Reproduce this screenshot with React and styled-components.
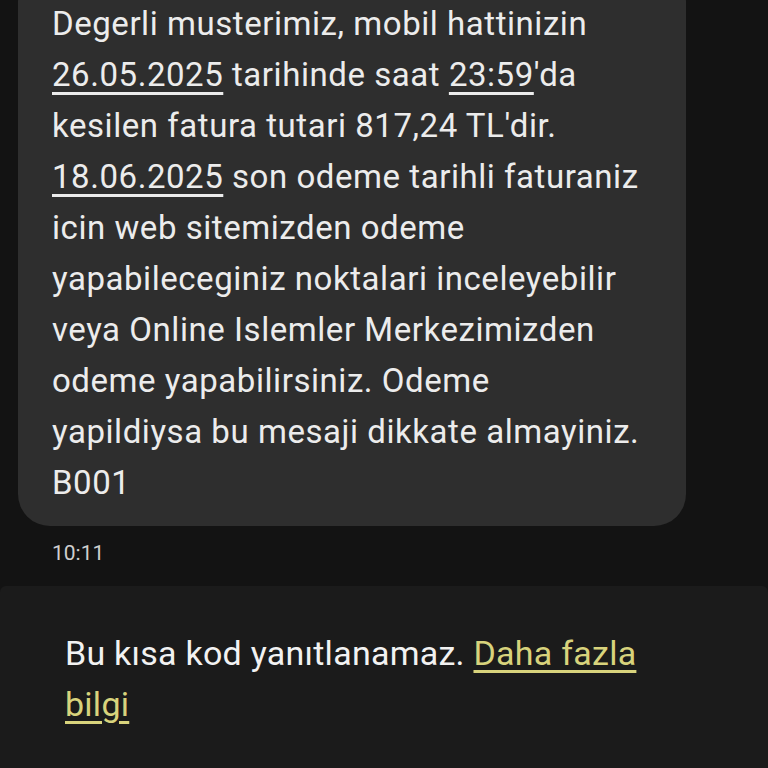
import React from "react";
import styled, { createGlobalStyle } from "styled-components";

const GlobalStyle = createGlobalStyle`
  html, body {
    margin: 0;
    padding: 0;
    background: #131313;
  }
  body {
    font-family: Roboto, "Noto Sans", sans-serif;
    overflow: hidden;
  }
`;

const Screen = styled("div")({
  width: "768px",
  height: "768px",
  display: "flex",
  flexDirection: "column",
  background: "#131313",
  overflow: "hidden",
});

const Thread = styled("div")({
  display: "flex",
  flexDirection: "column",
  padding: "0 82px 0 18px",
  marginTop: "-30px",
});

const Bubble = styled("div")({
  background: "#2e2e2e",
  borderRadius: "32px",
  padding: "28px 20px 18px 34px",
  color: "#ececec",
  fontSize: "33px",
  lineHeight: "51px",
  letterSpacing: "0.55px",
});

const Underlined = styled("span")({
  textDecoration: "underline",
  textDecorationThickness: "3px",
  textUnderlineOffset: "6px",
});

const Time = styled("div")({
  color: "#cfcfcf",
  fontSize: "21px",
  lineHeight: "24px",
  padding: "15px 0 0 34px",
});

const Notice = styled("div")({
  marginTop: "21px",
  flex: 1,
  background: "#1b1b1b",
  borderRadius: "6px 6px 0 0",
  padding: "42px 80px 0 65px",
  color: "#f2f2f2",
  fontSize: "34px",
  lineHeight: "51px",
  letterSpacing: "0.25px",
});

const Link = styled("a")({
  color: "#d8d37c",
  textDecoration: "underline",
  textDecorationThickness: "3px",
  textUnderlineOffset: "5px",
});

export default function App() {
  return (
    <Screen>
      <GlobalStyle />
      <Thread>
        <Bubble>
          Degerli musterimiz, mobil hattinizin
          <br />
          <Underlined>26.05.2025</Underlined> tarihinde saat{" "}
          <Underlined>23:59</Underlined>'da
          <br />
          kesilen fatura tutari 817,24 TL'dir.
          <br />
          <Underlined>18.06.2025</Underlined> son odeme tarihli faturaniz
          <br />
          icin web sitemizden odeme
          <br />
          yapabileceginiz noktalari inceleyebilir
          <br />
          veya Online Islemler Merkezimizden
          <br />
          odeme yapabilirsiniz. Odeme
          <br />
          yapildiysa bu mesaji dikkate almayiniz.
          <br />
          B001
        </Bubble>
        <Time>10:11</Time>
      </Thread>
      <Notice>
        Bu kısa kod yanıtlanamaz. <Link>Daha fazla bilgi</Link>
      </Notice>
    </Screen>
  );
}
